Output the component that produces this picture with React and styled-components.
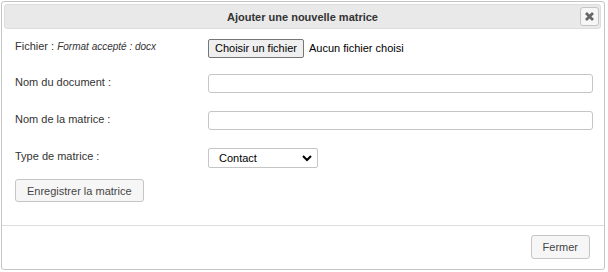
import React from "react";
import styled, { createGlobalStyle } from "styled-components";

const GlobalStyle = createGlobalStyle`
  body {
    margin: 0;
    background: #fff;
    font-family: "Liberation Sans", Arial, sans-serif;
    color: #333;
  }
`;

const Dialog = styled.div`
  position: relative;
  margin: 1px 0 0 1px;
  width: 604px;
  height: 269px;
  box-sizing: border-box;
  border: 1px solid #c5c5c5;
  border-radius: 3px;
  background: #fff;
  display: flex;
  flex-direction: column;
`;

const TitleBar = styled.div`
  margin: 2px 3px 0 2px;
  height: 25px;
  box-sizing: border-box;
  border: 1px solid #dddddd;
  border-radius: 3px;
  background: #e9e9e9;
  display: flex;
  align-items: center;
  justify-content: center;
  position: relative;
`;

const Title = styled.span`
  font-size: 11px;
  font-weight: bold;
  color: #333;
`;

const CloseButton = styled.button`
  position: absolute;
  right: 1px;
  top: 2px;
  width: 19px;
  height: 19px;
  padding: 0;
  border: 1px solid #c5c5c5;
  border-radius: 3px;
  background: #f6f6f6;
  display: flex;
  align-items: center;
  justify-content: center;
`;

const Content = styled.div`
  flex: 1;
  padding: 9px 11px 0 13px;
`;

const Row = styled.div`
  display: flex;
  align-items: center;
  height: ${p => p.h || 20}px;
  margin-bottom: ${p => p.gap || 17}px;
`;

const Label = styled.div`
  width: 193px;
  flex: none;
  font-size: 11px;
  color: #333;
  align-self: flex-start;
  padding-top: 2px;
`;

const Hint = styled.span`
  font-size: 10px;
  font-style: italic;
`;

const FileButton = styled.button`
  height: 19px;
  padding: 0 6px;
  font-family: "Liberation Sans", Arial, sans-serif;
  font-size: 11px;
  color: #000;
  background: #efefef;
  border: 1px solid #767676;
  border-radius: 2px;
`;

const FileName = styled.span`
  margin-left: 5px;
  font-size: 11px;
  color: #000;
`;

const TextInput = styled.input`
  width: 385px;
  height: 19px;
  box-sizing: border-box;
  border: 1px solid #c5c5c5;
  border-radius: 3px;
  background: #fff;
  font-size: 11px;
`;

const SelectBox = styled.div`
  width: 110px;
  height: 20px;
  box-sizing: border-box;
  border: 1px solid #c5c5c5;
  border-radius: 2px;
  padding: 0 5px 0 10px;
  display: flex;
  align-items: center;
  justify-content: space-between;
  font-size: 11px;
  color: #000;
`;

const Button = styled.button`
  height: ${p => p.h || 23}px;
  padding: 0 ${p => p.px || 12}px;
  font-family: "Liberation Sans", Arial, sans-serif;
  font-size: 11px;
  color: #454545;
  background: #f6f6f6;
  border: 1px solid #c5c5c5;
  border-radius: 3px;
`;

const ButtonPane = styled.div`
  border-top: 1px solid #dddddd;
  height: 44px;
  box-sizing: border-box;
  padding: 9px 14px 0 0;
  display: flex;
  justify-content: flex-end;
  align-items: flex-start;
`;

export default function App() {
  return (
    <>
      <GlobalStyle />
      <Dialog>
        <TitleBar>
          <Title>Ajouter une nouvelle matrice</Title>
          <CloseButton aria-label="close">
            <svg width="9" height="9" viewBox="0 0 9 9">
              <path d="M1 1 L8 8 M8 1 L1 8" stroke="#666" strokeWidth="2.8" />
            </svg>
          </CloseButton>
        </TitleBar>
        <Content>
          <Row h={20} gap={16}>
            <Label>
              Fichier : <Hint>Format accepté : docx</Hint>
            </Label>
            <FileButton type="button">Choisir un fichier</FileButton>
            <FileName>Aucun fichier choisi</FileName>
          </Row>
          <Row h={19} gap={18}>
            <Label>Nom du document :</Label>
            <TextInput type="text" />
          </Row>
          <Row h={19} gap={18}>
            <Label>Nom de la matrice :</Label>
            <TextInput type="text" />
          </Row>
          <Row h={20} gap={11}>
            <Label>Type de matrice :</Label>
            <SelectBox>
              <span>Contact</span>
              <svg width="10" height="7" viewBox="0 0 10 7">
                <path d="M1 1 L5 5 L9 1" fill="none" stroke="#000" strokeWidth="2" />
              </svg>
            </SelectBox>
          </Row>
          <Button px={11}>Enregistrer la matrice</Button>
        </Content>
        <ButtonPane>
          <Button h={24} px={11}>Fermer</Button>
        </ButtonPane>
      </Dialog>
    </>
  );
}
